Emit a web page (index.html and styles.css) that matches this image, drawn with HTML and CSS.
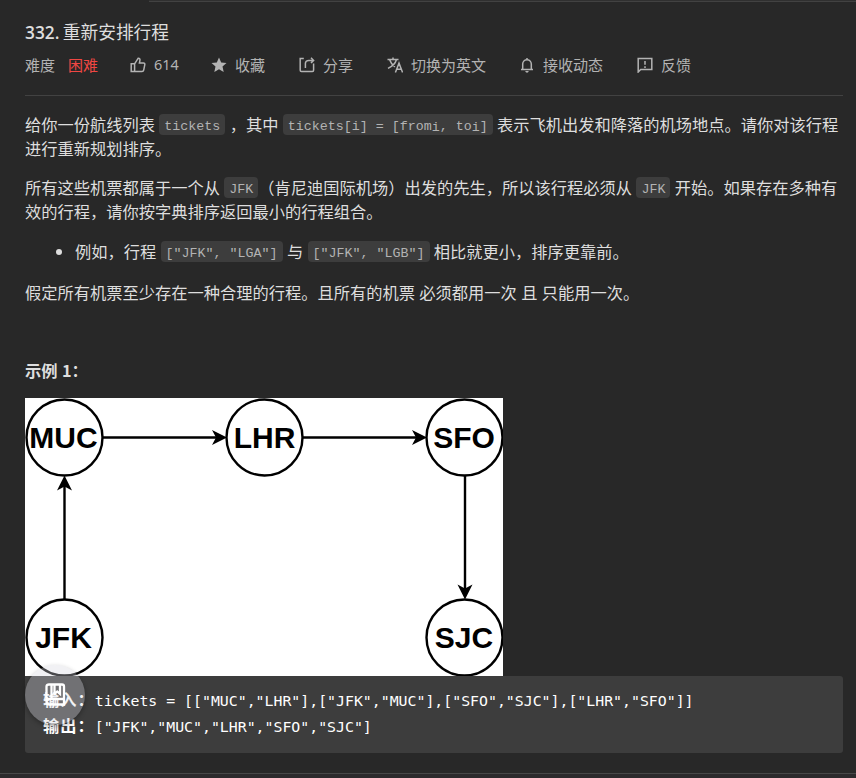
FILE: index.html
```html
<!DOCTYPE html>
<html lang="zh-CN">
<head>
<meta charset="utf-8">
<title>332. 重新安排行程</title>
<link rel="stylesheet" href="styles.css">
</head>
<body>
<div class="tabline"></div>
<main class="panel">
  <h1 class="title"><b>332.</b> 重新安排行程</h1>
  <div class="meta">
    <span class="item level">难度<em>困难</em></span>
    <span class="item like"><svg viewBox="0 0 16 16"><path d="M1.200 6.800h3.400v7.700H1.200zM4.600 6.800 8.200 1.200c1.600 0 2 1 1.700 2.200L9.400 6h4.100c1 0 1.500.7 1.300 1.600l-1.100 5.500c-.2.9-.8 1.400-1.700 1.400H4.600"/></svg>614</span>
    <span class="item star"><svg viewBox="0 0 16 16"><path class="solid" d="m8 .5 2.200 5 5.300.5-4 3.600 1.200 5.400L8 12.200 3.300 15l1.200-5.400L.5 6l5.300-.5z"/></svg>收藏</span>
    <span class="item share"><svg viewBox="0 0 16 16"><path d="M4.800 1.500H1.200v11.800q0 1.200 1.200 1.200h11q1.200 0 1.200-1.200V6.600M6.400 11V6.600q0-3.200 3.400-3.200h4.600M12 .8l2.600 2.600L12 6"/></svg>分享</span>
    <span class="item lang"><svg viewBox="0 0 16 16"><path d="M.5 2.600h11M6 .6v2M2.600 2.800c1 3 3 5.300 5.300 7M9.400 2.800C8.400 6.500 5 9.500 1 11.400M8.400 15.500 12 6.200l3.600 9.300M9.700 12.300h4.600"/></svg>切换为英文</span>
    <span class="item bell"><svg viewBox="0 0 16 16"><path d="M2 12.500h12M3.700 12.500V7a4.300 4.300 0 0 1 8.600 0v5.500M8 1v1.500"/><path class="solid" d="M6.200 14h3.600q-.4 1.700-1.800 1.700T6.200 14z"/></svg>接收动态</span>
    <span class="item feed"><svg viewBox="0 0 16 16"><path d="M1.200 15V1.500h13.600v11H3.700zM8 4v3.700M8 9.200v1.700"/></svg>反馈</span>
  </div>
  <article class="content">
    <p>给你一份航线列表 <code>tickets</code> ，其中 <code>tickets[i] = [from<sub>i</sub>, to<sub>i</sub>]</code> 表示飞机出发和降落的机场地点。请你对该行程<br>进行重新规划排序。</p>
    <p>所有这些机票都属于一个从 <code>JFK</code>（肯尼迪国际机场）出发的先生，所以该行程必须从 <code>JFK</code> 开始。如果存在多种有<br>效的行程，请你按字典排序返回最小的行程组合。</p>
    <ul><li>例如，行程 <code>["JFK", "LGA"]</code> 与 <code>["JFK", "LGB"]</code> 相比就更小，排序更靠前。</li></ul>
    <p>假定所有机票至少存在一种合理的行程。且所有的机票 必须都用一次 且 只能用一次。</p>
    <p class="example">示例 1：</p>
    <svg class="graph" viewBox="0 0 478 278">
      <g class="edges"><path d="M78 39.500H192M278 39.500H392M39.500 202V88M440 78V192"/></g>
      <g class="heads"><path d="m202 39.500-15-7.500 4 7.500-4 7.500zM402 39.500l-15-7.500 4 7.500-4 7.500zM39.500 77.500 32 92.500l7.500-4 7.500 4zM440 201.500l-7.500-15 7.500 4 7.500-4z"/></g>
      <g class="nodes"><circle cx="39.500" cy="39.500" r="38"/><circle cx="239.500" cy="39.500" r="38"/><circle cx="439.500" cy="39.500" r="38"/><circle cx="39.500" cy="239.500" r="38"/><circle cx="439.500" cy="239.500" r="38"/></g>
      <g class="labels"><text x="38.500" y="50">MUC</text><text x="239.500" y="50">LHR</text><text x="439" y="50">SFO</text><text x="38.500" y="250">JFK</text><text x="439" y="250">SJC</text></g>
    </svg>
    <pre><b>输入：</b>tickets = [["MUC","LHR"],["JFK","MUC"],["SFO","SJC"],["LHR","SFO"]]
<b>输出：</b>["JFK","MUC","LHR","SFO","SJC"]</pre>
  </article>
</main>
<footer class="bottom"></footer>
<button class="float" aria-label="笔记"><svg viewBox="0 0 24 24"><path d="M5 2.500h13q2 0 2 2v18H5q-2.500 0-2.500-3v-15q0-2 2.500-2zM2.500 19q0-2 2.500-2h15M7.500 3v14M10.500 3v9l2.700-2.500 2.800 2.500V3"/></svg></button>
</body>
</html>
```
FILE: styles.css
```css
* { box-sizing: border-box; }
body {
  margin: 0;
  width: 856px;
  height: 778px;
  overflow: hidden;
  display: flex;
  flex-direction: column;
  background: #282828;
  color: #dedede;
  font-family: "Noto Sans CJK SC", sans-serif;
}
.tabline { height: 2px; margin-left: 149px; background: #303030; border-bottom: 1px solid #424242; }
.panel { flex: 1; min-height: 0; padding: 16px 13px 0 25px; }
.title { margin: 0; height: 27px; font-size: 17.7px; line-height: 26px; font-weight: 400; white-space: nowrap; word-spacing: -.5px; }
.title b { font-family: "Open Sans", sans-serif; font-size: 17.3px; font-weight: 600; line-height: 0; }
.meta { display: flex; height: 51px; padding-top: 8px; border-bottom: 1px solid #424242; color: #b3b3b3; font-size: 15px; line-height: 24px; }
.item { display: flex; align-items: center; height: 24px; white-space: nowrap; }
.item svg { width: 16px; height: 16px; margin-right: 8px; fill: none; stroke: #b3b3b3; stroke-width: 1.5; }
.item .solid { fill: #b3b3b3; stroke: none; }
.level em { margin-left: 13px; color: #ef4743; font-style: normal; }
.level { width: 105px; }
.like { width: 81px; font-family: "Noto Sans", sans-serif; font-size: 14.4px; }
.star { width: 88px; }
.share { width: 88px; }
.lang { width: 132px; }
.bell { width: 118px; }
.content { padding-top: 16px; font-size: 16.25px; line-height: 24px; white-space: nowrap; word-spacing: .7px; }
p { margin: 0 0 15.3px; }
ul { margin: 0 0 17px; padding-left: 50px; }
code { padding: 5px 5px 1px; border-radius: 4px; background: #3d3d3d; color: #b3b3b3; font: 13.33px/1 "Liberation Mono", monospace; vertical-align: 1px; white-space: pre; word-spacing: 0; }
sub { font-size: inherit; line-height: 0; vertical-align: -1px; }
.example { margin: 54.4px 0 16px; font-weight: 700; }
.graph { display: block; width: 478px; height: 278px; background: #fff; }
.edges, .nodes { fill: none; stroke: #000; stroke-width: 2.4; }
.labels { font: bold 30px "Liberation Sans", sans-serif; text-anchor: middle; word-spacing: 0; }
pre { margin: 0; height: 77px; padding: 12px 18px; border-radius: 0 3px 3px 3px; background: #3d3d3d; color: #fff; font: 14.85px/26px "DejaVu Sans Mono", "Noto Sans CJK SC", monospace; word-spacing: 0; }
pre b { font: 700 16.25px/0 "Noto Sans CJK SC", sans-serif; letter-spacing: 1px; }
.bottom { height: 5px; border-top: 1px solid #484848; background: #2c2a2c; }
.float { position: absolute; left: 25px; top: 665px; width: 60px; height: 60px; padding: 0 0 3px 1px; border: 0; border-radius: 50%; background: rgba(215, 215, 224, .34); box-shadow: 0 2px 5px rgba(0, 0, 0, .3); }
.float svg { display: block; width: 24px; height: 24px; margin: 0 auto; fill: none; stroke: #fff; stroke-width: 2.3; }
```
